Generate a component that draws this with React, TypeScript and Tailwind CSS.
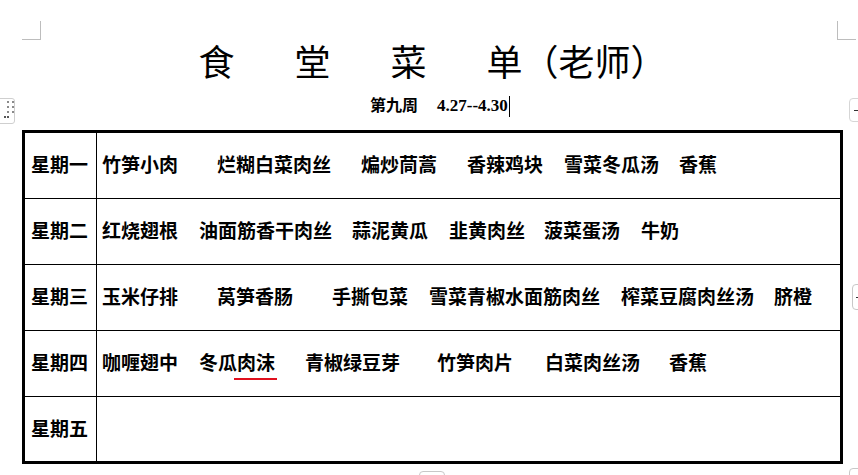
import React from "react";

const serif = "font-['Liberation_Serif','Noto_Sans_CJK_SC',serif]";

type Dish = { name: string; gap: string; flagged?: boolean };

const week: { day: string; dishes: Dish[] }[] = [
  {
    day: "星期一",
    dishes: [
      { name: "竹笋小肉", gap: "ml-0" },
      { name: "烂糊白菜肉丝", gap: "ml-[39px]" },
      { name: "煸炒茼蒿", gap: "ml-[30px]" },
      { name: "香辣鸡块", gap: "ml-[30px]" },
      { name: "雪菜冬瓜汤", gap: "ml-[21px]" },
      { name: "香蕉", gap: "ml-[20px]" },
    ],
  },
  {
    day: "星期二",
    dishes: [
      { name: "红烧翅根", gap: "ml-0" },
      { name: "油面筋香干肉丝", gap: "ml-[21px]" },
      { name: "蒜泥黄瓜", gap: "ml-[20px]" },
      { name: "韭黄肉丝", gap: "ml-[21px]" },
      { name: "菠菜蛋汤", gap: "ml-[19px]" },
      { name: "牛奶", gap: "ml-[21px]" },
    ],
  },
  {
    day: "星期三",
    dishes: [
      { name: "玉米仔排", gap: "ml-0" },
      { name: "莴笋香肠", gap: "ml-[39px]" },
      { name: "手撕包菜", gap: "ml-[39px]" },
      { name: "雪菜青椒水面筋肉丝", gap: "ml-[21px]" },
      { name: "榨菜豆腐肉丝汤", gap: "ml-[21px]" },
      { name: "脐橙", gap: "ml-[20px]" },
    ],
  },
  {
    day: "星期四",
    dishes: [
      { name: "咖喱翅中", gap: "ml-0" },
      { name: "冬瓜肉沫", gap: "ml-[21px]", flagged: true },
      { name: "青椒绿豆芽", gap: "ml-[30px]" },
      { name: "竹笋肉片", gap: "ml-[37px]" },
      { name: "白菜肉丝汤", gap: "ml-[32px]" },
      { name: "香蕉", gap: "ml-[29px]" },
    ],
  },
  { day: "星期五", dishes: [] },
];

// border-box heights, rows after the first include their 1px top rule
const rowHeights = ["h-[65px]", "h-[66px]", "h-[66px]", "h-[66px]", "h-[65px]"];

// Word's red squiggle under the last two characters
const Flagged = ({ name }: { name: string }) => (
  <span className="relative">
    {name.slice(0, 2)}
    <span className="relative">
      {name.slice(2)}
      <span className="absolute left-[-3px] right-[-2px] bottom-[-6px] h-[2px] bg-[#e0101e]" />
    </span>
  </span>
);

const App = () => {
  return (
    <div className={`relative w-[858px] h-[475px] overflow-hidden bg-white text-black ${serif}`}>
      {/* page corner marks */}
      <div className="absolute left-[22px] top-[21px] w-[19px] h-[19px] border-r border-b border-[#bdbdbd]" />
      <div className="absolute left-[837px] top-[21px] w-[19px] h-[19px] border-l border-b border-[#bdbdbd]" />

      {/* table move handle */}
      <div className="absolute left-[-6px] top-[98px] w-[21px] h-[26px] rounded-[3px] border border-[#cfcfcf] bg-white">
        <div className="grid grid-cols-2 gap-x-[3px] gap-y-[3px] mt-[2px] ml-[12px] w-[7px]">
          {Array.from({ length: 6 }).map((_, i) => (
            <span key={i} className="w-[2px] h-[2px] bg-[#8a8a8a]" />
          ))}
        </div>
        <div className="flex gap-[1px] ml-[9px] mt-[3px]">
          <span className="w-[2px] h-[2px] bg-[#555]" />
          <span className="w-[2px] h-[2px] bg-[#555]" />
        </div>
      </div>

      {/* side widgets */}
      <div className="absolute left-[849px] top-[98px] w-[20px] h-[24px] rounded-[4px] border border-[#d6d6d6] bg-white flex items-center pl-[4px]">
        <span className="w-[4px] h-[1px] bg-[#333]" />
      </div>
      <div className="absolute left-[852px] top-[284px] w-[20px] h-[26px] rounded-[4px] border border-[#c8c8c8] bg-white flex items-center pl-[3px]">
        <span className="w-[4px] h-[1px] bg-[#333]" />
      </div>
      <div className="absolute left-[419px] top-[471px] w-[26px] h-[10px] rounded-[4px] border border-[#c8c8c8] bg-white" />
      <div className="absolute left-[849px] top-[468px] w-[20px] h-[12px] rounded-[4px] border border-[#c8c8c8] bg-white" />

      <div className="pt-[46px] ml-[22px] w-[821px]">
        <h1 className="flex justify-center gap-[60px] h-[36px] text-[36px] leading-[36px] font-normal">
          <span>食</span>
          <span>堂</span>
          <span>菜</span>
          <span>单（老师）</span>
        </h1>

        <div className="flex items-center mt-[16px] h-[16px] pl-[348px] font-bold">
          <span className="text-[16px] leading-[16px]">第九周</span>
          <span className="ml-[19px] text-[17px] leading-[16px]">4.27--4.30</span>
          <span className="ml-[1px] w-[1px] h-[21px] bg-black" />
        </div>

        <div className="mt-[16px] border-[3px] border-black font-bold text-[19px] leading-[19px]">
          {week.map((row, i) => (
            <div key={row.day} className={`flex ${rowHeights[i]} ${i > 0 ? "border-t border-black" : ""}`}>
              <div className="w-[72px] shrink-0 border-r border-black flex items-center justify-center pr-[2px]">
                {row.day}
              </div>
              <div className="flex items-center pl-[5px] whitespace-nowrap">
                {row.dishes.map((d) => (
                  <span key={d.name} className={d.gap}>
                    {d.flagged ? <Flagged name={d.name} /> : d.name}
                  </span>
                ))}
              </div>
            </div>
          ))}
        </div>
      </div>
    </div>
  );
};

export default App;
